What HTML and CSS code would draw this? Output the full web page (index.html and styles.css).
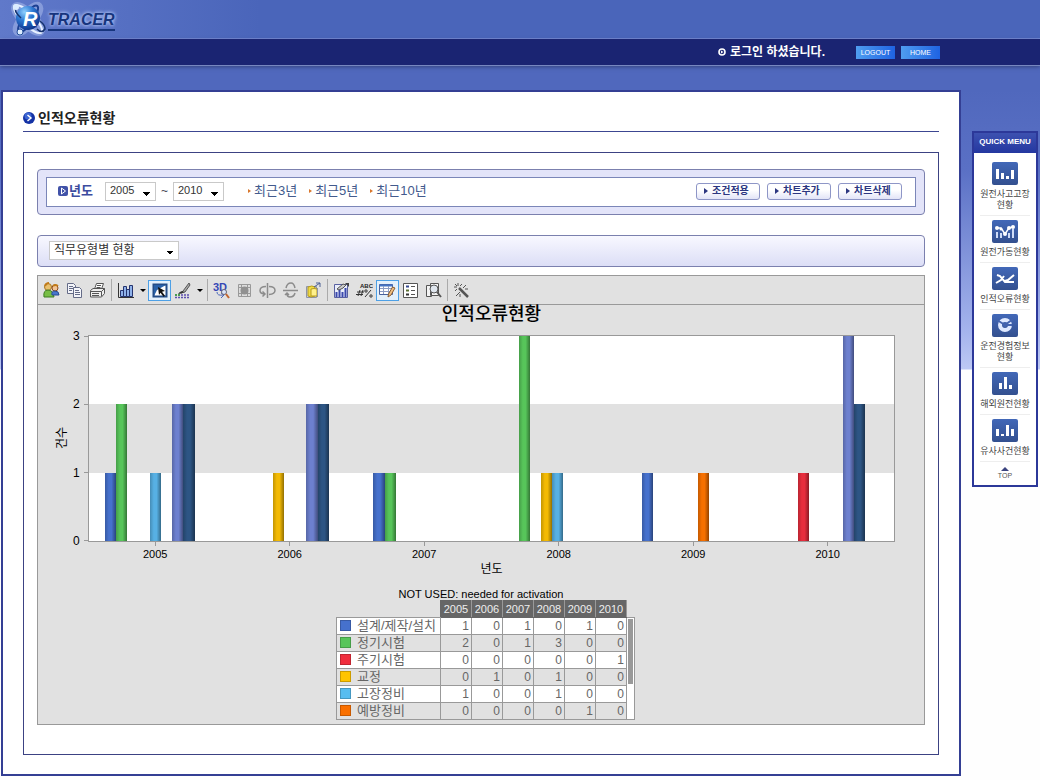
FILE: index.html
```html
<!DOCTYPE html>
<html lang="ko">
<head>
<meta charset="utf-8">
<title>인적오류현황</title>
<link rel="stylesheet" href="styles.css">
</head>
<body>
<header class="top">
  <div class="brand">
    <svg class="brand-mark" width="40" height="36" viewBox="0 0 40 36" aria-hidden="true">
      <defs><radialGradient id="globe" cx=".35" cy=".25" r=".8"><stop offset="0" stop-color="#8fd0ff"/><stop offset=".45" stop-color="#2d78d2"/><stop offset="1" stop-color="#0b2f86"/></radialGradient></defs>
      <g fill="none" stroke="#b9c9f2" stroke-width="7" opacity=".45"><ellipse cx="20" cy="18" rx="18" ry="6" transform="rotate(45 20 18)"/><ellipse cx="20" cy="18" rx="17" ry="6" transform="rotate(-50 20 18)"/></g>
      <ellipse cx="20" cy="18" rx="19" ry="6" transform="rotate(45 20 18)" fill="none" stroke="#e6f0ff" stroke-width="2"/>
      <ellipse cx="20" cy="18" rx="16" ry="5" transform="rotate(-55 20 18)" fill="none" stroke="#1c3f92" stroke-width="2"/>
      <circle cx="20" cy="17" r="12" fill="url(#globe)"/>
      <path d="M8 5q-3 5 5 12M29 28q5 5 8 0q0-4-5-8" fill="none" stroke="#16336f" stroke-width="1.5"/>
      <circle cx="8" cy="6" r="3" fill="#dcecff"/><circle cx="12" cy="31" r="3" fill="#dcecff" stroke="#24509b"/>
      <text x="15" y="25" class="brand-r">R</text>
    </svg>
    <span class="brand-name">TRACER</span>
  </div>
</header>
<nav class="bar">
  <svg width="8" height="8" viewBox="0 0 8 8" aria-hidden="true"><circle cx="4" cy="4" r="3" fill="none" stroke="#fff" stroke-width="1.6"/><path d="M3 2.5L5.5 4 3 5.500z" fill="#fff"/></svg>
  <span class="login">로그인 하셨습니다.</span>
  <button class="pill" type="button">LOGOUT</button>
  <button class="pill" type="button">HOME</button>
</nav>

<div class="page">
<main class="main">
  <h1 class="title">
    <svg width="12" height="12" viewBox="0 0 12 12" aria-hidden="true"><circle cx="6" cy="6" r="6" fill="#1432a5"/><circle cx="5" cy="4" r="3.500" fill="#3d66d4"/><path d="M4.500 3L8 6 4.500 9" fill="none" stroke="#fff" stroke-width="1.5"/></svg>
    인적오류현황
  </h1>
  <section class="panel">
    <form class="filter">
      <div class="filter-inner">
        <svg width="10" height="10" viewBox="0 0 10 10" aria-hidden="true"><rect width="10" height="10" rx="2" fill="#4152a8"/><path d="M3.500 2L7.500 5l-4 3z" fill="none" stroke="#fff"/></svg>
        <label class="year-label" for="from">년도</label>
        <select class="sel year" id="from"><option>2005</option></select>
        <span class="tilde">~</span>
        <select class="sel year" id="to" aria-label="종료 년도"><option>2010</option></select>
        <div class="links">
          <a href="#">최근3년</a><a href="#">최근5년</a><a href="#">최근10년</a>
        </div>
        <div class="actions">
          <button type="button" class="act">조건적용</button>
          <button type="button" class="act">차트추가</button>
          <button type="button" class="act">차트삭제</button>
        </div>
      </div>
    </form>
    <div class="kind"><select class="sel wide" aria-label="현황 구분"><option>직무유형별 현황</option></select></div>

    <section class="chart">
      <div class="tools">
        <button class="tool" type="button" aria-label="사용자"><svg viewBox="0 0 17 17"><circle cx="5" cy="5" r="3.500" fill="#e9c06d" stroke="#a87624"/><path d="M1 15q-1-7 4-7t6 7z" fill="#77be45" stroke="#3d7c22"/><circle cx="12" cy="6" r="3" fill="#f2c495" stroke="#8c4b20"/><path d="M9 13q-1-4 3-4t4 4z" fill="#4876cd" stroke="#294d93"/><path d="M2 4q1-3 4-3M10 4q2-2 5 0" stroke="#c07a18" fill="none" stroke-width="2"/></svg></button>
        <button class="tool" type="button" aria-label="복사"><svg viewBox="0 0 17 17" fill="#f4f5fa" stroke="#646b87"><path d="M1.500 1.500h6l2 2v8h-8z"/><path d="M3 4.500h4M3 6.500h4M3 8.500h3"/><path d="M7.500 5.500h6l2 2v8h-8z"/><path d="M9 8.500h4M9 10.500h5M9 12.500h5"/></svg></button>
        <button class="tool" type="button" aria-label="인쇄"><svg viewBox="0 0 17 17" fill="#eee" stroke="#555"><path d="M5.500 7l2-5.500h7L12.500 7z" fill="#fff"/><path d="M8 3.500h4M7.500 5.500h4"/><path d="M1.500 8.500L4 6.500h11.500v5l-3 3.500h-11z"/><path d="M1.500 9.500h11v5M12.500 9.500l3-3M3 11.500h7M3 13.500h7"/></svg></button>
        <i class="sep"></i>
        <button class="tool" type="button" aria-label="차트 종류"><svg viewBox="0 0 17 17"><path d="M1.500 1v14.500H17" fill="none" stroke="#333"/><g fill="#8fb2ea" stroke="#26346f"><path d="M3.500 8.500h3v6h-3zM6.500 4.500h3v10h-3zM9.500 7.500h3v7h-3zM12.500 3.500h3v11h-3z"/></g></svg></button>
        <button class="drop" type="button" aria-label="차트 종류 메뉴"></button>
        <button class="tool on" type="button" aria-label="선택"><svg viewBox="0 0 17 17"><path d="M2.500 2.500h13v12h-13z" fill="#fff" stroke="#234c87" stroke-width="2"/><path d="M3 3h12L6 8l-3 6z" fill="#2861a8"/><path d="M7 5l7 4-3 .8 3 4-1.500 1-3-4L8 13z" fill="#111"/></svg></button>
        <button class="tool" type="button" aria-label="색상"><svg viewBox="0 0 17 17"><path d="M15 1L9 9l-2 2 4-1 5-7z" fill="#aaa" stroke="#555"/><path d="M8 9q-3 1-4 3 4 0 6-2" fill="#333"/><path d="M1 13h15M1 15.500h15" stroke="#5d4fb0" stroke-width="1.500" stroke-dasharray="2 1"/><path d="M1 13h5" stroke="#4a9a50" stroke-width="2" stroke-dasharray="2 1"/></svg></button>
        <button class="drop" type="button" aria-label="색상 메뉴"></button>
        <i class="sep"></i>
        <button class="tool" type="button" aria-label="3D"><svg viewBox="0 0 17 17"><text x="0" y="9" class="ico-3d">3D</text><path d="M4 10q0 4 6 3M8 11l3 2-3 3" fill="none" stroke="#4964ba"/><circle cx="11" cy="10" r="2.500" fill="#dbe6fa" stroke="#667"/><path d="M13 12l3 4" stroke="#c4662e" stroke-width="2"/></svg></button>
        <button class="tool" type="button" aria-label="그리드"><svg viewBox="0 0 17 17"><path d="M2.500 2.500h12v12h-12zM2 5.500h13M2 11.500h13M5.500 2v13M11.500 2v13" fill="#ddd" stroke="#999"/><circle cx="8.500" cy="8.500" r="4" fill="#919191"/></svg></button>
        <button class="tool" type="button" aria-label="세로 회전"><svg viewBox="0 0 17 17" fill="none" stroke="#8c8c8c" stroke-width="1.500"><path d="M8.500 1v15M7 4.500q-6 0-6 4 0 3 4 3.500M10 12.500q6-.5 6-4 0-4-6-4M3.500 9.500L6 12l-2.500 2.500"/></svg></button>
        <button class="tool" type="button" aria-label="가로 회전"><svg viewBox="0 0 17 17" fill="none" stroke="#8c8c8c" stroke-width="1.500"><path d="M1 8.500h15M4 6q1-5 5-5 3 0 4 5M13 11q-1 4-5 4-3 0-3-3M3 13l2-2 2 2"/></svg></button>
        <button class="tool" type="button" aria-label="클러스터"><svg viewBox="0 0 17 17"><path d="M1.500 4.500h10v11h-10z" fill="#c8cedb" stroke="#8e94a6"/><path d="M3 5q4-2 7 0v9q-4 2-7 0z" fill="#f0dc45" stroke="#b69b1e"/><path d="M6 7q3-1 6 0v7H6z" fill="#fff18b" stroke="#b69b1e"/><path d="M9 5l6-4M11 1h4v4" stroke="#4d6096" fill="none"/><path d="M12.500 6v9" stroke="#8e94a6"/></svg></button>
        <i class="sep"></i>
        <button class="tool" type="button" aria-label="차트 속성"><svg viewBox="0 0 17 17"><path d="M1.500 2.500h13v13h-13z" fill="#e9edf9" stroke="#5860a0"/><path d="M3.500 10v5M6.500 7v8M9.500 10v5M12.500 6v9" stroke="#3a48ad" stroke-width="2"/><path d="M4 7l6-5 3 1-3 3-4 2z" fill="#ccc" stroke="#555"/><path d="M12 1h4v4z" fill="#444"/></svg></button>
        <button class="tool" type="button" aria-label="레이블"><svg viewBox="0 0 17 17"><text x="4" y="6" class="ico-abc">ABC</text><path d="M2 14l2-6M5 14l2-6M1 10h7M0 12.500h7M9 15l6-7" stroke="#333"/><circle cx="10" cy="9" r="1.200" fill="none" stroke="#333"/><circle cx="15" cy="14" r="1.200" fill="none" stroke="#333"/></svg></button>
        <button class="tool on" type="button" aria-label="데이터 표"><svg viewBox="0 0 17 17"><path d="M.5 2.500h13v10H.5z" fill="#fff" stroke="#48619c"/><path d="M.5 3.500h13" stroke="#4474c4" stroke-width="2"/><path d="M1 6.500h12M1 9.500h12M4.500 4v8M9.500 4v8" stroke="#8b9cc3"/><path d="M16 6l-4 7-3 2 .5-3 4-7z" fill="#f0c083" stroke="#8b5e32"/></svg></button>
        <button class="tool" type="button" aria-label="범례"><svg viewBox="0 0 17 17"><path d="M1.500 1.500h14v14h-14z" fill="#fff" stroke="#555"/><path d="M4 3.500h3v2H4z" fill="#36488e"/><path d="M4 7.500h3v2H4z" fill="#5b6f31"/><path d="M4 11.500h3v2H4z" fill="#333"/><path d="M9 4.500h4M9 8.500h4M9 12.500h4" stroke="#555"/></svg></button>
        <button class="tool" type="button" aria-label="확대"><svg viewBox="0 0 17 17" stroke="#555"><path d="M1.500 3.500h5v11h-5zM5.500 1.500h8v12h-8z" fill="#f4f4f4"/><circle cx="9" cy="7" r="4" fill="#dfe6ee"/><path d="M12 10l4 5" stroke-width="2"/></svg></button>
        <i class="sep"></i>
        <button class="tool" type="button" aria-label="마법사"><svg viewBox="0 0 17 17" stroke="#555" fill="none"><path d="M6 6l9 9" stroke-width="2.500"/><path d="M5 1v3M1 5h3M2 2l2 2M9 2L7 4M2 9l2-2M13 3l-3 3M3 14l4-4M12 7h3M7 12v3"/></svg></button>
      </div>

      <div class="plot-grid">
        <h2 class="chart-title">인적오류현황</h2>
        <div class="ylabel"><span>건수</span></div>
        <div class="yaxis"><span>3</span><span>2</span><span>1</span><span>0</span></div>
        <div class="plot">
          <div class="year-col"><i class="b c1 h1"></i><i class="b c2 h2"></i><i class="b c5 h1"></i><i class="b c7 h2"></i><i class="b c8 h2"></i></div>
          <div class="year-col"><i class="b c4 h1"></i><i class="b c7 h2"></i><i class="b c8 h2"></i></div>
          <div class="year-col"><i class="b c1 h1"></i><i class="b c2 h1"></i></div>
          <div class="year-col"><i class="b c2 h3"></i><i class="b c4 h1"></i><i class="b c5 h1"></i></div>
          <div class="year-col"><i class="b c1 h1"></i><i class="b c6 h1"></i></div>
          <div class="year-col"><i class="b c3 h1"></i><i class="b c7 h3"></i><i class="b c8 h2"></i></div>
        </div>
        <div class="xaxis"><span>2005</span><span>2006</span><span>2007</span><span>2008</span><span>2009</span><span>2010</span></div>
        <div class="xlabel">년도</div>
      </div>

      <p class="note">NOT USED: needed for activation</p>
      <div class="data">
        <table>
          <thead><tr><td></td><th scope="col">2005</th><th scope="col">2006</th><th scope="col">2007</th><th scope="col">2008</th><th scope="col">2009</th><th scope="col">2010</th></tr></thead>
          <tbody>
            <tr><th scope="row"><i class="key k1"></i>설계/제작/설치</th><td>1</td><td>0</td><td>1</td><td>0</td><td>1</td><td>0</td></tr>
            <tr><th scope="row"><i class="key k2"></i>정기시험</th><td>2</td><td>0</td><td>1</td><td>3</td><td>0</td><td>0</td></tr>
            <tr><th scope="row"><i class="key k3"></i>주기시험</th><td>0</td><td>0</td><td>0</td><td>0</td><td>0</td><td>1</td></tr>
            <tr><th scope="row"><i class="key k4"></i>교정</th><td>0</td><td>1</td><td>0</td><td>1</td><td>0</td><td>0</td></tr>
            <tr><th scope="row"><i class="key k5"></i>고장정비</th><td>1</td><td>0</td><td>0</td><td>1</td><td>0</td><td>0</td></tr>
            <tr><th scope="row"><i class="key k6"></i>예방정비</th><td>0</td><td>0</td><td>0</td><td>0</td><td>1</td><td>0</td></tr>
          </tbody>
        </table>
        <div class="track"><div class="thumb"></div></div>
      </div>
    </section>
  </section>
</main>

<aside class="quick">
  <h2 class="quick-head">QUICK MENU</h2>
  <div class="quick-list">
    <a href="#" class="q"><svg viewBox="0 0 26 23"><path d="M4 7h3v10H4zM9 11h3v6H9zM14 14h3v3h-3zM19 8h3v9h-3z" fill="#fff"/></svg><span>원전사고고장<br>현황</span></a>
    <a href="#" class="q"><svg viewBox="0 0 26 23"><path d="M5 18v-6M9 18v-5M17 18v-5M21 18V9" stroke="#cfdcf7" stroke-width="2"/><path d="M5 8h4l4 6 4-6 4-1" fill="none" stroke="#fff" stroke-width="1.500"/><g fill="#fff"><circle cx="5" cy="8" r="2"/><circle cx="9" cy="9" r="1.500"/><circle cx="13" cy="14" r="2"/><circle cx="17" cy="8" r="2"/><circle cx="21" cy="7" r="2"/></g></svg><span>원전가동현황</span></a>
    <a href="#" class="q"><svg viewBox="0 0 26 23"><path d="M5 8l3 1 5 6h9M4 16l5-3 3-4M13 14l3-1 6-5" fill="none" stroke="#fff" stroke-width="2"/></svg><span>인적오류현황</span></a>
    <a href="#" class="q"><svg viewBox="0 0 26 23"><circle cx="13" cy="11" r="5" fill="none" stroke="#dfe9ff" stroke-width="4"/><path d="M13 11l8-6M13 11L5 6M13 11h7" stroke="#4464ae" stroke-width="2"/><circle cx="13" cy="11" r="2" fill="#4464ae"/></svg><span>운전경험정보<br>현황</span></a>
    <a href="#" class="q"><svg viewBox="0 0 26 23"><path d="M7 11h3v6H7zM12 5h3v12h-3zM17 13h3v4h-3z" fill="#fff"/></svg><span>해외원전현황</span></a>
    <a href="#" class="q"><svg viewBox="0 0 26 23"><path d="M4 10h3v7H4zM9 15h3v2H9zM14 6h3v11h-3zM19 10h3v7h-3z" fill="#fff"/></svg><span>유사사건현황</span></a>
    <a href="#" class="to-top">TOP</a>
  </div>
</aside>
</div>
</body>
</html>
```
FILE: styles.css
```css
* { box-sizing: border-box; }
body {
  margin: 0;
  min-height: 100vh;
  color: #000;
  font: 12px "Liberation Sans", "Noto Sans CJK KR", sans-serif;
  background: linear-gradient(#5068bd 0, #5068bd 90px, #5a70c5 170px, #a4b3ed 330px, #bcc8f4 369px, #fefefe 370px) no-repeat #fefefe;
}
button, select { font-family: inherit; }
button { padding: 0; border: 0; background: none; }
h1, h2, p { margin: 0; }
a { text-decoration: none; }

/* Header */
.top {
  height: 39px;
  padding: 1px 8px;
  border-bottom: 1px solid #7287d1;
  background: radial-gradient(ellipse at 20px 42px, #94a3dc 0, transparent 80px), linear-gradient(90deg, #6079ca, #4a65ba 260px, #4a65ba);
}
.brand { display: flex; align-items: center; }
.brand-r { font: italic bold 20px "Liberation Sans", sans-serif; fill: #fff; }
.brand-name {
  margin-top: 4px;
  border-bottom: 2px solid #17357d;
  color: #17357d;
  font: italic bold 16px/18px "Liberation Sans", sans-serif;
  text-shadow: 0 0 3px #b5c8f6, 0 0 4px #b5c8f6;
}
.bar {
  display: flex;
  align-items: center;
  justify-content: flex-end;
  height: 26px;
  padding-right: 100px;
  background: #1a2472;
  box-shadow: 0 1px #7787c0, 0 2px 4px #35447e;
}
.login { margin: 0 31px 0 4px; color: #fff; font-weight: bold; line-height: 16px; }
.pill {
  width: 39px;
  height: 13px;
  color: #fff;
  font-size: 7px;
  line-height: 13px;
  background: linear-gradient(90deg, #4f9df0, #1f63e2);
}
.pill + .pill { margin-left: 6px; }

/* Page frame */
.page { display: flex; align-items: flex-start; gap: 11px; padding: 25px 2px 4px 1px; }
.main { flex: 1; min-width: 0; padding: 17px 20px 19px; border: 2px solid #343f94; background: #fff; }
.title {
  display: flex;
  align-items: center;
  gap: 3px;
  height: 23px;
  margin-bottom: 20px;
  padding-bottom: 4px;
  border-bottom: 1px solid #3c4691;
  color: #222;
  font-size: 14px;
  line-height: 18px;
}
.panel { padding: 16px 13px 29px; border: 1px solid #3c4283; }

/* Filters */
.filter { padding: 7px 8px; border: 1px solid #7b80ae; border-radius: 4px; background: #e3e4f9; }
.filter-inner {
  display: flex;
  align-items: center;
  height: 30px;
  padding: 0 13px 2px 11px;
  border: 1px solid #7b86b8;
  background: #fff;
}
.year-label { width: 36px; margin-left: 1px; color: #3c4c9f; font-size: 13px; font-weight: bold; line-height: 16px; }
.sel {
  appearance: none;
  height: 19px;
  padding: 0 4px 2px;
  border: 1px solid #c9c9c9;
  border-radius: 0;
  color: #333;
  background:
    linear-gradient(45deg, transparent 50%, #000 50%) right 8px top 9px / 4px 4px no-repeat,
    linear-gradient(135deg, #000 50%, transparent 50%) right 4px top 9px / 4px 4px no-repeat,
    #fff;
}
.year { width: 51px; font-size: 11px; }
.wide { width: 130px; font-size: 12px; line-height: 16px; }
.tilde { width: 17px; color: #445; text-align: center; }
.links { display: flex; gap: 12px; margin-left: 24px; }
.links a { display: flex; align-items: center; gap: 3px; color: #425a8d; font-size: 13px; line-height: 16px; }
.links a::before { content: ""; border: 2px solid transparent; border-left: 3px solid #d9772c; border-right: 0; }
.actions { display: flex; gap: 7px; margin-left: auto; }
.act {
  display: flex;
  align-items: center;
  gap: 4px;
  width: 64px;
  height: 17px;
  padding-left: 7px;
  border: 1px solid #8e96c7;
  border-radius: 3px;
  color: #2c3681;
  font-size: 10px;
  font-weight: bold;
  line-height: 14px;
  background: linear-gradient(#fff 40%, #e2e4f7);
}
.act::before { content: ""; border: 3px solid transparent; border-left: 4px solid #2c3681; border-right: 0; }
.kind {
  display: flex;
  height: 32px;
  margin: 20px 0 8px;
  padding: 5px 11px;
  border: 1px solid #7b80ae;
  border-radius: 4px;
  background: linear-gradient(#f8f8ff, #dcdef6);
}

/* Chart */
.chart { padding-bottom: 4px; border: 1px solid #999; background: #e1e1e1; }
.tools { display: flex; align-items: center; height: 29px; padding: 0 2px; border-bottom: 1px solid #999; }
.tool { display: flex; align-items: center; justify-content: center; width: 23px; height: 21px; }
.tool svg { flex: none; width: 17px; height: 17px; }
.tool.on { border: 1px solid #4da0e6; background: #e3f0fb; }
.drop { width: 11px; height: 21px; }
.drop::before { content: ""; display: block; width: 0; margin: 0 auto; border: 3px solid transparent; border-top-color: #000; border-bottom: 0; }
.sep { width: 1px; height: 22px; margin: 0 2px; background: #aaa; }
.ico-3d { font: bold 11px "Liberation Sans", sans-serif; fill: #3547b5; }
.ico-abc { font: bold 6px "Liberation Sans", sans-serif; fill: #222; }

.plot-grid { display: grid; grid-template-columns: 34px 16px 1fr 29px; }
.chart-title {
  grid-column: 3;
  height: 30px;
  font-size: 18px;
  font-weight: 500;
  line-height: 18px;
  text-align: center;
}
.ylabel { grid-column: 1; grid-row: 2; display: flex; align-items: center; justify-content: center; padding-left: 14px; }
.ylabel span { writing-mode: vertical-rl; text-orientation: sideways; rotate: 180deg; line-height: 16px; }
.yaxis { grid-column: 2; grid-row: 2; display: flex; flex-direction: column; justify-content: space-between; margin: -5px 0; }
.yaxis span { display: flex; align-items: center; justify-content: space-between; padding-left: 1px; line-height: 12px; }
.yaxis span::after { content: ""; width: 4px; height: 1px; background: #999; }
.plot {
  grid-column: 3;
  grid-row: 2;
  display: grid;
  grid-template-columns: repeat(6, 1fr);
  height: 207px;
  border: 1px solid #999;
  background: linear-gradient(#fff 33%, #e1e1e1 33%, #e1e1e1 67%, #fff 67%);
}
.year-col { display: grid; grid-template-columns: repeat(9, 1fr); align-items: end; padding: 0 13% 0 12%; }
.b { grid-row: 1; background-image: linear-gradient(90deg, #0003, #0000 35%, #0000 60%, #0006); }
.h1 { height: 33%; }
.h2 { height: 67%; }
.h3 { height: 100%; }
.c1 { grid-column: 1; background-color: #4671cd; }
.c2 { grid-column: 2; background-color: #57c55a; }
.c3 { grid-column: 3; background-color: #e72d3d; }
.c4 { grid-column: 4; background-color: #f3ba04; }
.c5 { grid-column: 5; background-color: #57b0e4; }
.c6 { grid-column: 6; background-color: #f67000; }
.c7 { grid-column: 7; background-color: #6d80cf; }
.c8 { grid-column: 8; background-color: #2d5584; }
.xaxis { grid-column: 3; display: grid; grid-template-columns: repeat(6, 1fr); height: 20px; font-size: 11px; line-height: 16px; text-align: center; }
.xaxis span::before { content: ""; display: block; width: 1px; height: 4px; margin: 0 auto; background: #999; }
.xlabel { grid-column: 3; line-height: 14px; text-align: center; }
.note { margin-top: 12px; font-size: 11px; line-height: 12px; text-align: center; }

/* Data table */
.data { display: flex; justify-content: center; padding-left: 9px; }
table { border-collapse: collapse; color: #666; }
tr { height: 17px; }
td, th { width: 31px; height: 17px; padding: 0 2px 0 0; border: 1px solid #999; font-size: 12px; font-weight: normal; line-height: 16px; text-align: right; }
thead td { border: 0; border-bottom: 1px solid #999; }
thead th { padding: 0; border: 1px solid #666; border-right-color: #999; color: #eee; font-size: 11px; text-align: center; background: #666; }
tbody th { display: table-cell; width: 104px; padding: 0 3px; font-size: 13px; text-align: left; white-space: nowrap; }
tbody tr:nth-child(odd) { background: #fff; }
.key { display: inline-block; width: 11px; height: 11px; margin-right: 6px; border: 1px solid #0003; vertical-align: -1px; }
.k1 { background: #4671cd; }
.k2 { background: #57c55a; }
.k3 { background: #f02d3d; }
.k4 { background: #ffc400; }
.k5 { background: #57bdf0; }
.k6 { background: #fa7000; }
.track { width: 8px; margin-top: 17px; padding: 1px; border: 1px solid #999; border-left: 0; background: #fff; }
.thumb { width: 5px; height: 66%; background: #999; }

/* Quick menu */
.quick { width: 66px; margin-top: 41px; border: 2px solid #2c3899; background: #fff; }
.quick-head { height: 20px; color: #fff; font-size: 8px; line-height: 18px; text-align: center; white-space: nowrap; background: linear-gradient(#3d51b0, #2437a0); }
.quick-list { padding: 5px 6px 4px; }
.q { display: flex; flex-direction: column; align-items: center; padding: 4px 0; border-bottom: 1px solid #eee; color: #444; font-size: 9px; line-height: 11px; text-align: center; white-space: nowrap; }
.q svg { width: 26px; height: 23px; margin-bottom: 4px; border-radius: 2px; background: linear-gradient(#4268b8, #33508f); }
.to-top { display: block; padding-top: 5px; color: #555; font-size: 7px; line-height: 10px; text-align: center; }
.to-top::before { content: ""; display: block; width: 0; margin: 0 auto; border: 4px solid transparent; border-top: 0; border-bottom-color: #3a437f; }
```
